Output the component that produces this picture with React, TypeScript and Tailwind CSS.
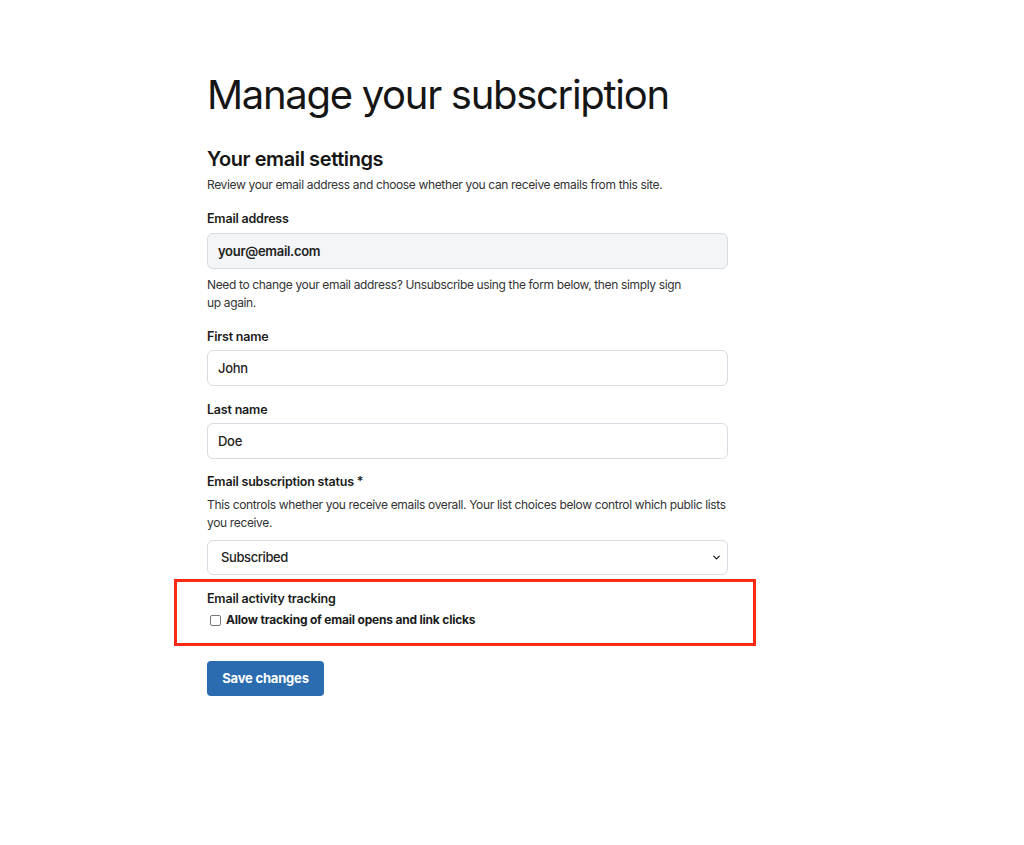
import { ChevronDown } from "lucide-react";

const font = { fontFamily: "Inter, 'Noto Sans', sans-serif" };

function Label({ children, className = "" }: { children: React.ReactNode; className?: string }) {
  return (
    <label className={`block text-[12.5px] leading-[18px] font-semibold tracking-[-0.2px] text-[#1b1b1b] ${className}`}>
      {children}
    </label>
  );
}

function TextInput({ value, className = "", muted = false }: { value: string; className?: string; muted?: boolean }) {
  return (
    <input
      readOnly
      value={value}
      className={`block w-full h-[36px] rounded-[6px] border border-[#d7dce3] px-[10px] text-[13px] tracking-[-0.3px] text-[#222] outline-none ${
        muted ? "bg-[#f4f5f7] font-semibold" : "bg-white font-medium"
      } ${className}`}
    />
  );
}

export default function App() {
  return (
    <div className="min-h-screen bg-white" style={font}>
      <div className="ml-[207px] w-[521px] pt-[70px] pb-20">
        <h1 className="text-[40px] leading-[50px] font-normal tracking-[-1.3px] text-[#151515]">
          Manage your subscription
        </h1>

        <h2 className="mt-[27px] text-[20px] leading-[24px] font-semibold tracking-[-0.4px] text-[#151515]">
          Your email settings
        </h2>
        <p className="mt-[5px] text-[12px] leading-[18px] tracking-[-0.35px] text-[#333]">
          Review your email address and choose whether you can receive emails from this site.
        </p>

        <Label className="mt-[16px]">Email address</Label>
        <TextInput value="your@email.com" muted className="mt-[5px]" />
        <p className="mt-[7px] max-w-[480px] text-[12px] leading-[18px] tracking-[-0.35px] text-[#333]">
          Need to change your email address? Unsubscribe using the form below, then simply sign up again.
        </p>

        <Label className="mt-[16px]">First name</Label>
        <TextInput value="John" className="mt-[4px]" />

        <Label className="mt-[15px]">Last name</Label>
        <TextInput value="Doe" className="mt-[4px]" />

        <Label className="mt-[14px]">Email subscription status *</Label>
        <p className="mt-[5px] text-[12px] leading-[18px] tracking-[-0.35px] text-[#333]">
          This controls whether you receive emails overall. Your list choices below control which public lists
          you receive.
        </p>
        <div className="relative mt-[8px]">
          <select className="block w-full h-[35px] appearance-none rounded-[6px] border border-[#d7dce3] bg-white pl-[13px] pr-8 text-[13px] font-medium tracking-[-0.4px] text-[#222] outline-none">
            <option>Subscribed</option>
            <option>Unsubscribed</option>
          </select>
          <ChevronDown
            className="pointer-events-none absolute right-[6px] top-[12px] h-[11px] w-[11px] text-[#222]"
            strokeWidth={3}
          />
        </div>

        <div className="mt-[4px] ml-[-33px] mr-[-28px] border-[3px] border-[#ff2a14] pl-[30px] pt-[8px] pb-[14px]">
          <Label>Email activity tracking</Label>
          <label className="mt-[3px] flex items-center gap-[5px] text-[12px] leading-[18px] font-bold tracking-[-0.2px] text-[#1b1b1b]">
            <input
              type="checkbox"
              className="ml-[3px] h-[11px] w-[11px] appearance-none rounded-[2px] border border-[#777] bg-white"
            />
            Allow tracking of email opens and link clicks
          </label>
        </div>

        <button className="mt-[15px] h-[35px] w-[117px] rounded-[4px] bg-[#2b6cb0] text-[13px] font-bold tracking-[-0.2px] text-white">
          Save changes
        </button>
      </div>
    </div>
  );
}
